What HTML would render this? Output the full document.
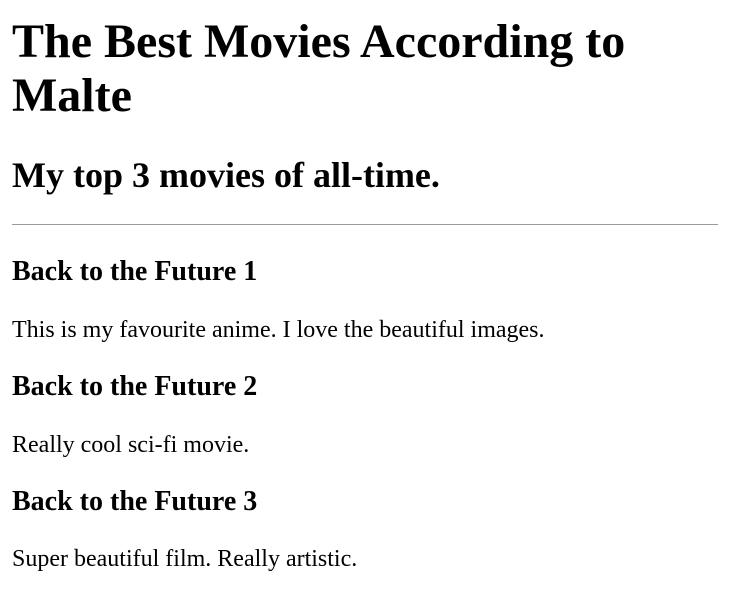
<!DOCTYPE html>
<html>
<head>
<meta charset="utf-8">
<style>
html, body { margin: 0; padding: 0; }
body { padding: 0 12px; font-family: "Liberation Serif", serif; color: #000; background: #fff; }
h1 { font-size: 48px; line-height: 54px; margin: 15px 0 32px; font-weight: bold; }
h2 { font-size: 36px; line-height: 41.4px; margin: 32px 0 28px; font-weight: bold; }
h3 { font-size: 28px; line-height: 32.3px; margin: 27px 0 28px; font-weight: bold; }
p { font-size: 24px; line-height: 27.6px; margin: 24px 0; }
hr { border: none; border-top: 1px solid #9a9a9a; height: 0; margin: 28px 0 31px; }
</style>
</head>
<body>
<h1>The Best Movies According to Malte</h1>
<h2>My top 3 movies of all-time.</h2>
<hr>
<h3 style="margin-top:31px">Back to the Future 1</h3>
<p>This is my favourite anime. I love the beautiful images.</p>
<h3>Back to the Future 2</h3>
<p>Really cool sci-fi movie.</p>
<h3>Back to the Future 3</h3>
<p>Super beautiful film. Really artistic.</p>
</body>
</html>
